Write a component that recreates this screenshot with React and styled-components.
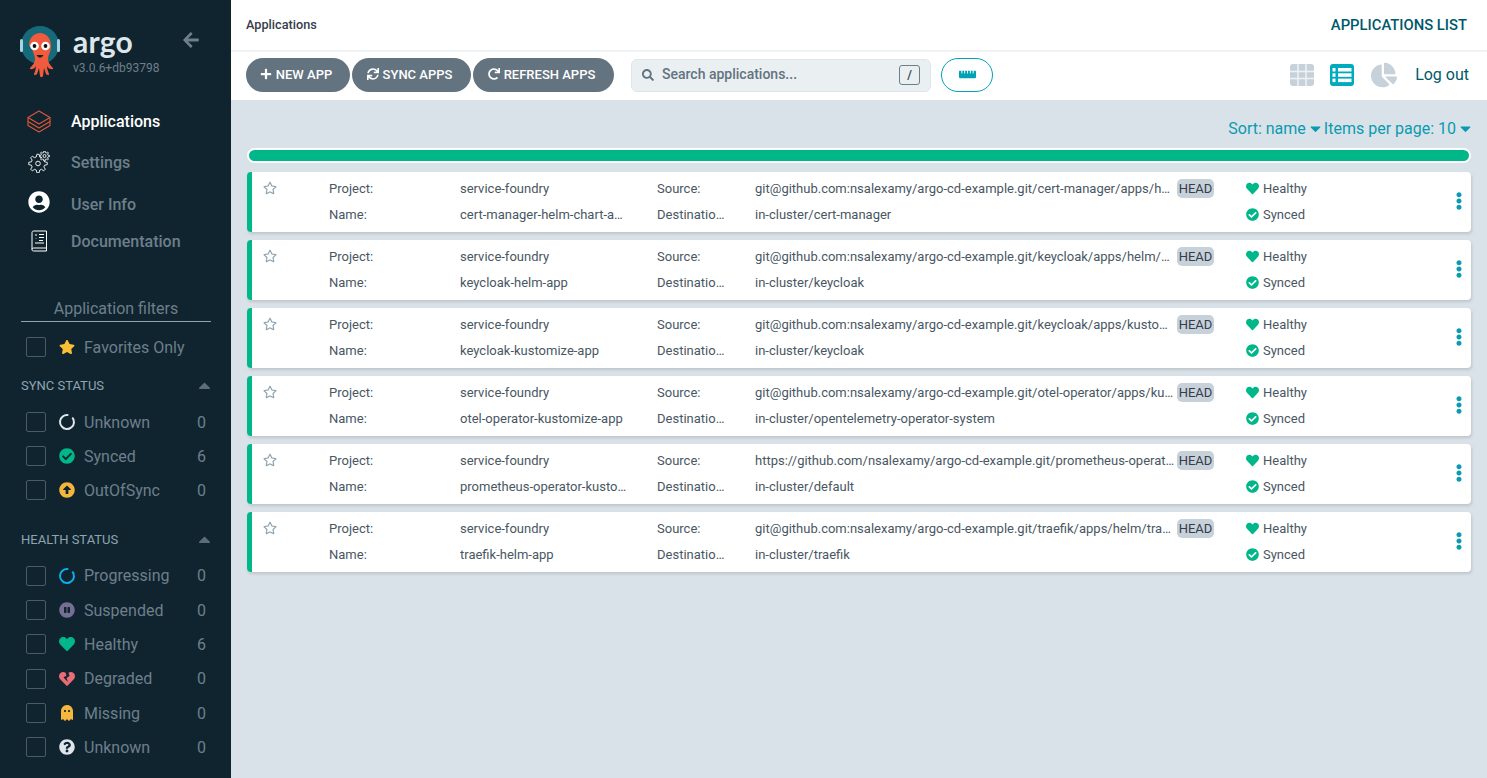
import React from 'react';
import styled, { createGlobalStyle } from 'styled-components';
import {
  FaArrowLeft, FaUserCircle, FaStar, FaRegStar, FaCaretUp, FaCaretDown, FaCheckCircle,
  FaArrowAltCircleUp, FaPauseCircle, FaHeart, FaHeartBroken, FaGhost, FaQuestionCircle, FaPlus, FaSync,
  FaRedo, FaSearch, FaRulerHorizontal, FaChartPie, FaEllipsisV,
} from 'react-icons/fa';

const Global = createGlobalStyle`
  html, body { margin: 0; padding: 0; height: 100%; }
  body { font-family: Roboto, "Liberation Sans", sans-serif; background: #dae2e9; overflow: hidden; }
  * { box-sizing: border-box; }
`;

const Page = styled.div`display: flex; width: 1487px; height: 778px;`;
const Sidebar = styled.aside`width: 231px; flex: none; background: #10242f; color: #6d7f8b; display: flex; flex-direction: column;`;
const Brand = styled.div`height: 100px; padding: 26px 0 0 20px; display: flex;`;
const BrandText = styled.div`margin-left: 13px; display: flex; flex-direction: column; width: 90px;`;
const Wordmark = styled.span`font-family: "Lato", sans-serif; font-size: 30px; font-weight: 700; line-height: 30px; color: #dee6eb; letter-spacing: 0.2px;`;
const Version = styled.span`font-size: 12px; line-height: 14px; margin-top: 5px; color: #6d7f8b; white-space: nowrap;`;
const Back = styled.span`margin-left: 19px; margin-top: 5px; color: #6d7f8b; font-size: 18px; line-height: 18px;`;
const Nav = styled.nav`display: flex; flex-direction: column; height: 173px;`;
const NavItem = styled.div`
  height: ${p => p.$h}px; display: flex; align-items: center; padding-left: 26px;
  font-size: 16px; font-weight: 500; color: ${p => (p.$active ? '#ffffff' : '#6d7f8b')};
`;
const NavIcon = styled.span`width: 26px; height: 26px; margin-right: 19px; margin-top: ${p => p.$mt || 0}px; display: flex; align-items: center; justify-content: center; color: #fff; font-size: 22px;`;
const Filters = styled.div`padding: 26px 20px 0 21px; display: flex; flex-direction: column;`;
const FilterTitle = styled.div`font-size: 16px; line-height: 19px; text-align: center; color: #6d7f8b; padding-bottom: 3px; border-bottom: 1px solid #8fa4b1;`;
const FilterRow = styled.div`display: flex; align-items: center; height: ${p => p.$h || 34}px; padding-left: 5px; font-size: 16px; color: #6d7f8b; ${p => p.$mt ? `margin-top: ${p.$mt}px;` : ''}`;
const Check = styled.span`width: 20px; height: 20px; flex: none; border: 1px solid #4a5b66; border-radius: 2px; margin-right: 12px;`;
const Glyph = styled.span`width: 17px; display: flex; justify-content: center; margin-right: 9px; font-size: 16px; color: ${p => p.$c};`;
const Label = styled.span`flex: 1;`;
const Count = styled.span`width: 14px; text-align: left;`;
const Section = styled.div`display: flex; justify-content: space-between; align-items: center; height: 20px; font-size: 13px; color: #8fa4b1; margin-top: ${p => p.$mt}px; margin-bottom: ${p => p.$mb}px; & svg { color: #5c6d78; font-size: 19px; margin-right: -3px; }`;
const Main = styled.main`flex: 1; min-width: 0; display: flex; flex-direction: column;`;
const TopBar = styled.header`height: 52px; background: #fff; border-bottom: 2px solid #eff3f5; display: flex; align-items: center; justify-content: space-between; padding: 0 20px 0 15px;`;
const Crumb = styled.div`font-size: 12.7px; font-weight: 500; color: #363c4a; margin-bottom: 2px;`;
const PageTitle = styled.div`font-size: 14.8px; font-weight: 500; color: #00586c;`;
const Toolbar = styled.div`height: 48px; background: #fff; display: flex; align-items: center; padding: 0 18px 2px 15px;`;
const Btn = styled.button`
  height: 34px; border: 0; border-radius: 17px; background: #63737f; color: #fff; padding: 0 4px 2px 0; width: ${p => p.$w}px;
  margin-right: 2px; display: flex; align-items: center; justify-content: center; gap: 4px;
  font: 500 13px Roboto, sans-serif; & svg { font-size: 12px; }
`;
const Search = styled.div`width: 300px; height: 33px; margin-left: 15px; background: #eaeff2; border: 1px solid #dee6eb; border-radius: 6px; display: flex; align-items: center; padding: 0 10px; color: #63737f; font-size: 14px; font-weight: 500; & > svg { font-size: 12px; margin-right: 8px; }`;
const Placeholder = styled.span`flex: 1; padding-bottom: 2px;`;
const Key = styled.span`width: 21px; height: 20px; border: 1px solid #6d7f8b; border-radius: 3px; display: flex; align-items: center; justify-content: center; font-size: 12px; color: #363c4a;`;
const RulerBtn = styled.button`width: 52px; height: 34px; margin-left: 10px; border: 1px solid #00a2b3; border-radius: 17px; background: #fff; color: #00a2b3; font-size: 17px; display: flex; align-items: center; justify-content: center; padding: 0 0 2px;`;
const Views = styled.div`margin-left: auto; display: flex; align-items: center;`;
const ViewIcon = styled.span`display: flex; font-size: ${p => p.$s}px; margin-right: ${p => p.$mr}px; color: ${p => p.$c};`;
const Logout = styled.span`font-size: 16px; color: #00586c; margin-bottom: 2px;`;
const Content = styled.div`padding: 16px 16px 0; flex: 1;`;
const SortBar = styled.div`display: flex; justify-content: flex-end; align-items: center; height: 24px; font-size: 16px; color: #0a9bb0; gap: 3px;`;
const SortOpt = styled.span`display: flex; align-items: center; gap: 4px; & svg { font-size: 17px; width: 11px; }`;
const Progress = styled.div`height: 15px; margin-top: 8px; border: 2px solid #fff; border-radius: 8px; background: #00b78a;`;
const List = styled.div`margin-top: 9px; display: flex; flex-direction: column; gap: 8px;`;
const Row = styled.div`
  height: 60px; background: #fff; border-left: 5px solid #00b78a; border-radius: 4px; box-shadow: 1px 2px 3px rgba(0,0,0,.13);
  display: grid; grid-template-columns: 77px 131px 197px 98px 422px 69px 1fr 24px; grid-template-rows: 26px 26px; padding-top: 3px;
  font-size: 13px; color: #495763; align-items: center;
`;
const Star = styled.span`padding-left: 11px; display: flex; color: #8fa4b1; font-size: 14px; grid-row: 1;`;
const Cell = styled.span`white-space: nowrap; overflow: hidden; text-overflow: ellipsis; padding-right: ${p => p.$pr || 0}px; grid-column: ${p => p.$col}; grid-row: ${p => p.$row};`;
const Head = styled.span`grid-column: 6; grid-row: 1; width: 37px; height: 19px; background: #c7d1da; border-radius: 5px; display: flex; align-items: center; justify-content: center; font-size: 13px; color: #363c4a;`;
const Status = styled.span`display: flex; align-items: center; gap: 4px; grid-column: 7; grid-row: ${p => p.$row}; & svg { color: #00b78a; font-size: 13px; }`;
const Menu = styled.span`grid-column: 8; grid-row: 1 / 3; color: #0a9bb0; font-size: 18px; display: flex; margin-left: 3px;`;

const gearPath = (cx, cy, r, R, teeth) => {
  const pts = [];
  const step = (Math.PI * 2) / teeth;
  for (let i = 0; i < teeth; i++) {
    const a = i * step;
    [[-0.32, r], [-0.16, R], [0.16, R], [0.32, r]].forEach(([f, rad]) => {
      const t = a + f * step;
      pts.push(`${(cx + rad * Math.cos(t)).toFixed(2)} ${(cy + rad * Math.sin(t)).toFixed(2)}`);
    });
  }
  return `M${pts.join('L')}Z`;
};

const Octopus = () => (
  <svg width="40" height="52" viewBox="0 0 40 52">
    <circle cx="20" cy="19" r="19" fill="#176a7a" />
    <rect x="0" y="13" width="3" height="13" rx="1.5" fill="#a9d6e5" />
    <rect x="37" y="13" width="3" height="13" rx="1.5" fill="#a9d6e5" />
    <path d="M9 20c0-8 5-13 11-13s11 5 11 13c0 6-3 9-3 13 0 3 2 6 4 8 2 1 1 3-1 2-2 0-3-1-4-3 0 3 1 5 2 8 0 2-2 1-3 0l-2-6-1 8c-1 2-3 1-3 0l-1-8-2 6c-1 1-3 2-3 0 1-3 2-5 2-8-1 2-2 3-4 3-2 1-3-1-1-2 2-2 4-5 4-8 0-4-3-7-3-13Z" fill="#ef5b3c" />
    <circle cx="14.500" cy="20" r="4.300" fill="#fff" />
    <circle cx="25.500" cy="20" r="4.300" fill="#fff" />
    <circle cx="14.500" cy="20" r="1.900" fill="#111" />
    <circle cx="25.500" cy="20" r="1.900" fill="#111" />
    <path d="M16.500 29c2 3.500 5 3.500 7 0Z" fill="#222" />
  </svg>
);
const StackIcon = () => (
  <svg width="24" height="23" viewBox="0 0 24 23" fill="none" stroke="#e0563a" strokeWidth="1.1" strokeLinejoin="round">
    <path d="M12 1 23 7.500 12 14 1 7.500Z" />
    <path d="M1 7.500V11.500L12 18 23 11.500V7.500" />
    <path d="M1 11.500V15.500L12 22 23 15.500V11.500" />
  </svg>
);
const GearsIcon = () => (
  <svg width="22" height="22" viewBox="0 0 22 22" fill="none" stroke="#fff" strokeWidth="0.9" strokeLinejoin="round">
    <path d={gearPath(10, 12.500, 6.800, 9.300, 8)} />
    <circle cx="10" cy="12.500" r="2.300" />
    <path d={gearPath(16.500, 5, 3.500, 5, 8)} fill="#10242f" />
    <circle cx="16.500" cy="5" r="1.500" />
  </svg>
);
const BookIcon = () => (
  <svg width="17" height="23" viewBox="0 0 17 23" fill="none" stroke="#fff" strokeWidth="1">
    <path d="M2.500 1h13v17h-13c-1 0-1.500.7-1.500 1.500V2.500C1 1.700 1.700 1 2.500 1Z" />
    <path d="M1 19.500c0 1 .7 1.500 1.500 1.500h13v-3" />
    <path d="M4 5h2M5 8v.5M8 4.500h5M8 7.500h5M8 10.500h4M4 13h9" />
  </svg>
);
const Ring = ({ c, rot }) => (
  <svg width="16" height="16" viewBox="0 0 16 16" fill="none" style={{ transform: `rotate(${rot}deg)` }}>
    <circle cx="8" cy="8" r="7" stroke={c} strokeWidth="2" strokeDasharray="39 5" />
  </svg>
);
const GridIcon = () => (
  <svg width="24" height="22" viewBox="0 0 24 22">
    <rect width="24" height="22" rx="3" fill="#c7d1da" />
    <path d="M8 0v22M16 0v22M0 7.500h24M0 14.500h24" stroke="#eef2f5" strokeWidth="1.500" />
  </svg>
);
const ListIcon = () => (
  <svg width="24" height="22" viewBox="0 0 24 22">
    <rect width="24" height="22" rx="3" fill="#00aabf" />
    <rect x="2.500" y="4" width="3" height="3.500" fill="#fff" />
    <rect x="2.500" y="9.300" width="3" height="3.500" fill="#fff" />
    <rect x="2.500" y="14.600" width="3" height="3.500" fill="#fff" />
    <rect x="8" y="4" width="13.500" height="3.500" fill="#fff" />
    <rect x="8" y="9.300" width="13.500" height="3.500" fill="#fff" />
    <rect x="8" y="14.600" width="13.500" height="3.500" fill="#fff" />
  </svg>
);

const sync = [
  ['Unknown', 0, <Ring c="#dee6eb" rot={-40} />, '#dee6eb'],
  ['Synced', 6, <FaCheckCircle />, '#00b78a'],
  ['OutOfSync', 0, <FaArrowAltCircleUp />, '#f4b63c'],
];
const health = [
  ['Progressing', 0, <Ring c="#0dadea" rot={-40} />, '#0dadea', 35],
  ['Suspended', 0, <FaPauseCircle />, '#766f94', 34],
  ['Healthy', 6, <FaHeart />, '#00b78a', 34],
  ['Degraded', 0, <FaHeartBroken />, '#e96d76', 35],
  ['Missing', 0, <FaGhost />, '#f4b63c', 34],
  ['Unknown', 0, <FaQuestionCircle />, '#dee6eb', 34],
];
const apps = [
  ['cert-manager-helm-chart-app', 'git@github.com:nsalexamy/argo-cd-example.git/cert-manager/apps/helm', 'in-cluster/cert-manager'],
  ['keycloak-helm-app', 'git@github.com:nsalexamy/argo-cd-example.git/keycloak/apps/helm/keycloak', 'in-cluster/keycloak'],
  ['keycloak-kustomize-app', 'git@github.com:nsalexamy/argo-cd-example.git/keycloak/apps/kustomize', 'in-cluster/keycloak'],
  ['otel-operator-kustomize-app', 'git@github.com:nsalexamy/argo-cd-example.git/otel-operator/apps/kustomize', 'in-cluster/opentelemetry-operator-system'],
  ['prometheus-operator-kustomize-app', 'https://github.com/nsalexamy/argo-cd-example.git/prometheus-operator/apps', 'in-cluster/default'],
  ['traefik-helm-app', 'git@github.com:nsalexamy/argo-cd-example.git/traefik/apps/helm/traefik', 'in-cluster/traefik'],
];

export default function App() {
  return (
    <Page>
      <Global />
      <Sidebar>
        <Brand>
          <Octopus />
          <BrandText>
            <Wordmark>argo</Wordmark>
            <Version>v3.0.6+db93798</Version>
          </BrandText>
          <Back><FaArrowLeft /></Back>
        </Brand>
        <Nav>
          <NavItem $active $h={43}><NavIcon><StackIcon /></NavIcon>Applications</NavItem>
          <NavItem $h={38}><NavIcon><GearsIcon /></NavIcon>Settings</NavItem>
          <NavItem $h={46}><NavIcon $mt={-4}><FaUserCircle /></NavIcon>User Info</NavItem>
          <NavItem $h={29}><NavIcon><BookIcon /></NavIcon>Documentation</NavItem>
        </Nav>
        <Filters>
          <FilterTitle>Application filters</FilterTitle>
          <FilterRow $mt={8}><Check /><Glyph $c="#f8c032"><FaStar /></Glyph><Label>Favorites Only</Label></FilterRow>
          <Section $mt={11} $mb={10}>SYNC STATUS<FaCaretUp /></Section>
          {sync.map(([n, v, i, c]) => (
            <FilterRow key={n}><Check /><Glyph $c={c}>{i}</Glyph><Label>{n}</Label><Count>{v}</Count></FilterRow>
          ))}
          <Section $mt={22} $mb={9}>HEALTH STATUS<FaCaretUp /></Section>
          {health.map(([n, v, i, c, h]) => (
            <FilterRow key={n} $h={h}><Check /><Glyph $c={c}>{i}</Glyph><Label>{n}</Label><Count>{v}</Count></FilterRow>
          ))}
        </Filters>
      </Sidebar>
      <Main>
        <TopBar>
          <Crumb>Applications</Crumb>
          <PageTitle>APPLICATIONS LIST</PageTitle>
        </TopBar>
        <Toolbar>
          <Btn $w={104}><FaPlus />NEW APP</Btn>
          <Btn $w={119}><FaSync />SYNC APPS</Btn>
          <Btn $w={141}><FaRedo />REFRESH APPS</Btn>
          <Search><FaSearch /><Placeholder>Search applications...</Placeholder><Key>/</Key></Search>
          <RulerBtn><FaRulerHorizontal /></RulerBtn>
          <Views>
            <ViewIcon $mr={16}><GridIcon /></ViewIcon>
            <ViewIcon $mr={17}><ListIcon /></ViewIcon>
            <ViewIcon $s={26} $mr={18} $c="#c7d1da"><FaChartPie /></ViewIcon>
            <Logout>Log out</Logout>
          </Views>
        </Toolbar>
        <Content>
          <SortBar>
            <SortOpt>Sort: name<FaCaretDown /></SortOpt>
            <SortOpt>Items per page: 10<FaCaretDown /></SortOpt>
          </SortBar>
          <Progress />
          <List>
            {apps.map(([name, src, dest]) => (
              <Row key={name}>
                <Star><FaRegStar /></Star>
                <Cell $col={2} $row={1}>Project:</Cell>
                <Cell $col={3} $row={1}>service-foundry</Cell>
                <Cell $col={4} $row={1}>Source:</Cell>
                <Cell $col={5} $row={1} $pr={2}>{src}</Cell>
                <Head>HEAD</Head>
                <Status $row={1}><FaHeart />Healthy</Status>
                <Cell $col={2} $row={2}>Name:</Cell>
                <Cell $col={3} $row={2} $pr={30}>{name}</Cell>
                <Cell $col={4} $row={2} $pr={30}>Destination:</Cell>
                <Cell $col={5} $row={2}>{dest}</Cell>
                <Status $row={2}><FaCheckCircle />Synced</Status>
                <Menu><FaEllipsisV /></Menu>
              </Row>
            ))}
          </List>
        </Content>
      </Main>
    </Page>
  );
}
